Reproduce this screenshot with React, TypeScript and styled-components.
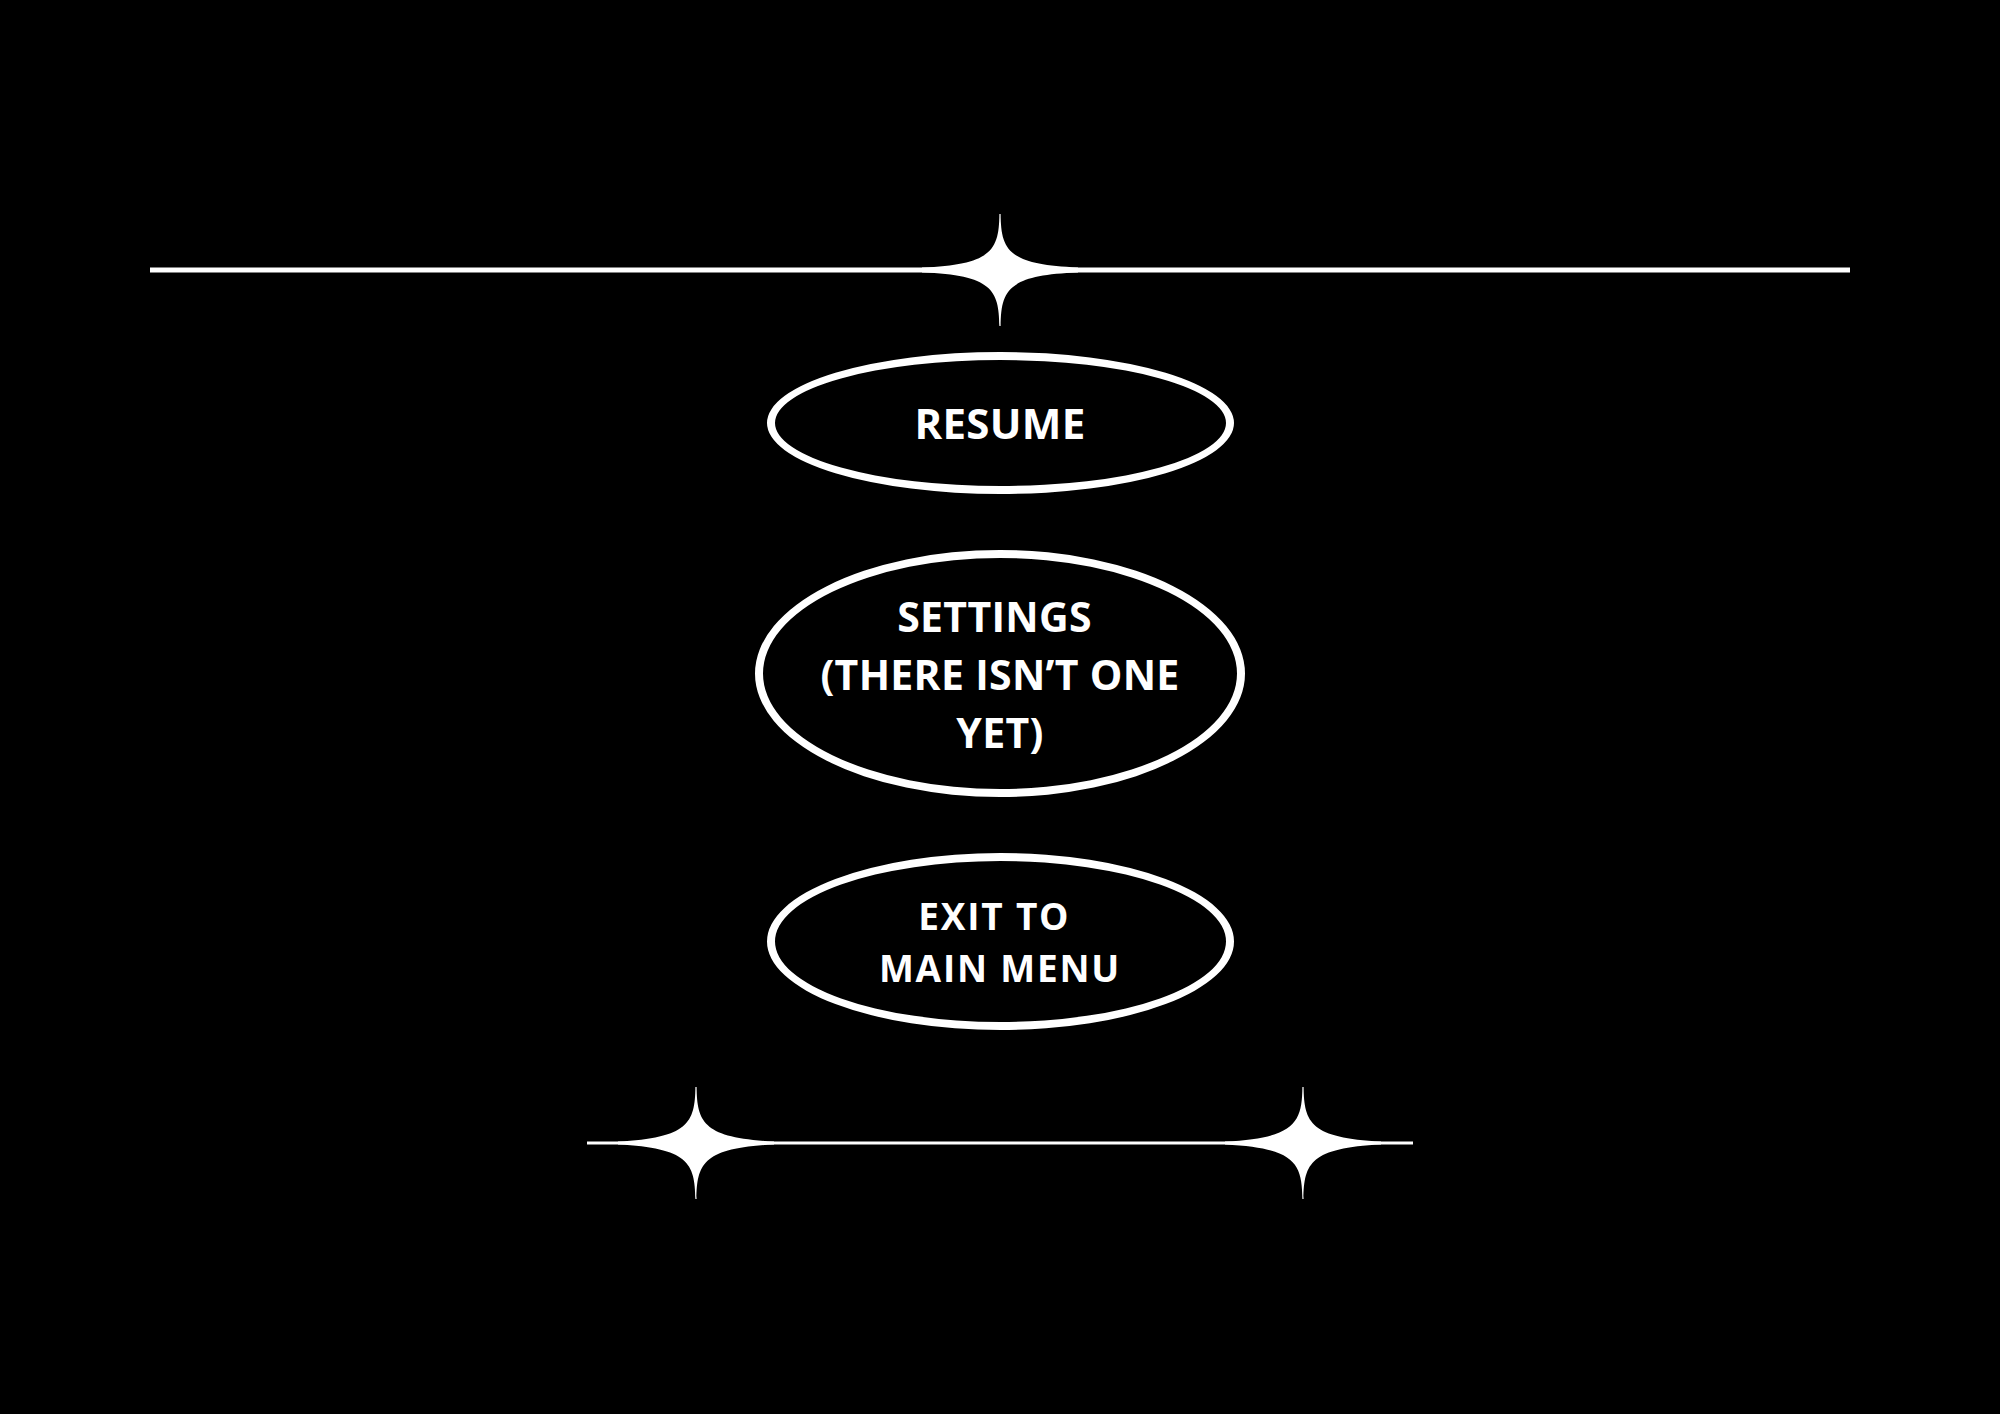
import React from 'react';
import styled, { createGlobalStyle } from 'styled-components';

const GlobalStyle = createGlobalStyle`
  html, body {
    margin: 0;
    padding: 0;
    background: #000;
  }
  body {
    font-family: 'Open Sans', 'Noto Sans', sans-serif;
  }
`;

const Page = styled.div`
  width: 2000px;
  height: 1414px;
  background: #000;
  display: flex;
  flex-direction: column;
  align-items: center;
  padding-top: 213px;
  box-sizing: border-box;
  overflow: hidden;
`;

const Menu = styled.nav`
  display: flex;
  flex-direction: column;
  align-items: center;
  gap: 56px;
  margin: 25px 0 56px;
`;

const Oval = styled.button<{ $w: number; $h: number; $size: number; $lh: number; $ls?: number }>`
  width: ${p => p.$w}px;
  height: ${p => p.$h}px;
  box-sizing: border-box;
  border: 8px solid #fff;
  border-radius: 50%;
  background: #000;
  color: #fff;
  display: flex;
  flex-direction: column;
  align-items: center;
  justify-content: center;
  padding: 0;
  cursor: pointer;
  font-family: 'Open Sans', 'Noto Sans', sans-serif;
  font-size: ${p => p.$size}px;
  font-weight: 700;
  line-height: ${p => p.$lh}px;
  letter-spacing: ${p => p.$ls ?? 0.3}px;
  text-transform: uppercase;
`;

const Line = styled.span`
  display: block;
  white-space: pre;
`;

// four-point sparkle: thin vertical spikes, long tapering horizontal arms
const sparkle = (cx: number, cy: number, half: number) =>
  `M ${cx - 0.6} ${cy - 56} C ${cx - 1} ${cy - 20} ${cx - 8} ${cy - 5} ${cx - 78} ${cy - half}` +
  ` L ${cx - 78} ${cy + half} C ${cx - 8} ${cy + 5} ${cx - 1} ${cy + 20} ${cx - 0.6} ${cy + 56}` +
  ` L ${cx + 0.6} ${cy + 56} C ${cx + 1} ${cy + 20} ${cx + 8} ${cy + 5} ${cx + 78} ${cy + half}` +
  ` L ${cx + 78} ${cy - half} C ${cx + 8} ${cy - 5} ${cx + 1} ${cy - 20} ${cx + 0.6} ${cy - 56} Z`;

type RuleProps = { width: number; thickness: number; stars: number[] };

const Rule = ({ width, thickness, stars }: RuleProps) => {
  const cy = 57;
  const half = thickness / 2;
  return (
    <svg width={width} height={114} viewBox={`0 0 ${width} 114`} style={{ display: 'block' }}>
      <rect x={0} y={cy - half} width={width} height={thickness} fill="#fff" />
      {stars.map(x => (
        <path key={x} d={sparkle(x, cy, half)} fill="#fff" />
      ))}
    </svg>
  );
};

export default function App() {
  return (
    <>
      <GlobalStyle />
      <Page>
        <Rule width={1700} thickness={5} stars={[850]} />
        <Menu>
          <Oval $w={467} $h={142} $size={42} $lh={56}>
            <Line>RESUME</Line>
          </Oval>
          <Oval $w={490} $h={247} $size={41} $lh={58}>
            <Line>{'SETTINGS '}</Line>
            <Line>(THERE ISN’T ONE</Line>
            <Line>YET)</Line>
          </Oval>
          <Oval $w={467} $h={177} $size={37} $lh={52} $ls={1.8}>
            <Line>{'EXIT TO '}</Line>
            <Line>MAIN MENU</Line>
          </Oval>
        </Menu>
        <Rule width={826} thickness={3} stars={[109, 716]} />
      </Page>
    </>
  );
}
